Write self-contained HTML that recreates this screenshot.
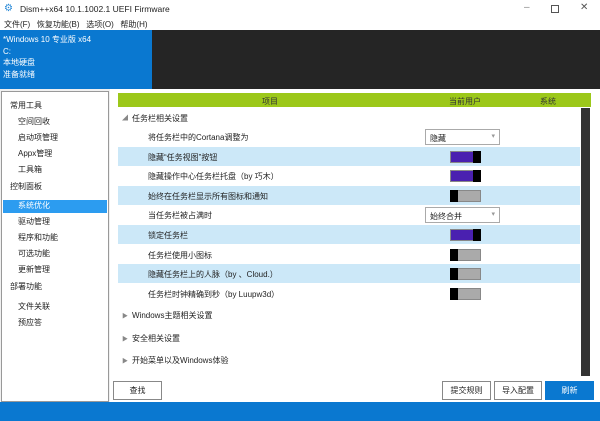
<!DOCTYPE html>
<html><head><meta charset="utf-8"><style>
*{margin:0;padding:0;box-sizing:border-box}
body{width:600px;height:421px;overflow:hidden;background:#fff;font-family:"Liberation Sans","Noto Sans CJK SC",sans-serif;font-size:8px;color:#222;position:relative}
.a{position:absolute;white-space:nowrap}
.row{position:absolute;left:118px;width:462px;height:19px}
.hl{background:#cce8f8}
.lbl{position:absolute;left:30px;top:5px}
.tog{position:absolute;left:332px;top:4px;width:31px;height:12px;border:1px solid #888}
.on{background:#4a20b0}
.off{background:#aaa}
.knob{position:absolute;top:-1px;width:8px;height:12px;background:#000}
.sel{position:absolute;left:307px;top:2px;width:75px;height:16px;border:1px solid #aaa;background:#fff;padding:3px 4px}
.sel:after{content:"▾";position:absolute;right:4px;top:2px;color:#999;font-size:7px}
.btn{position:absolute;top:381px;height:19px;border:1px solid #888;background:#fff;text-align:center;line-height:17px}
</style></head><body>
<div class="a" style="left:4px;top:4px;width:12px;height:10px;color:#2a8ad8;font-size:10px;line-height:10px">⚙</div>
<div class="a" style="left:20px;top:4px;font-size:8.5px">Dism++x64 10.1.1002.1 UEFI Firmware</div>
<div class="a" style="left:524px;top:2px;color:#888;font-size:10px">–</div>
<div class="a" style="left:551px;top:5px;width:8px;height:8px;border:1px solid #555"></div>
<div class="a" style="left:580px;top:2px;font-size:10px;color:#555">✕</div>
<div class="a" style="left:4px;top:19px;font-size:8px">文件(F)&nbsp;&nbsp;&nbsp;恢复功能(B)&nbsp;&nbsp;&nbsp;选项(O)&nbsp;&nbsp;&nbsp;帮助(H)</div>
<div class="a" style="left:0;top:30px;width:600px;height:59px;background:#252525"></div>
<div class="a" style="left:0;top:30px;width:152px;height:59px;background:#0a78d0;color:#fff;padding:4px 3px;line-height:11.5px;font-size:8px">*Windows 10 专业版 x64<br>C:<br>本地硬盘<br>准备就绪</div>
<div class="a" style="left:0;top:89px;width:600px;height:313px;background:#f0f0f0"></div>
<div class="a" style="left:1px;top:91px;width:108px;height:311px;background:#fff;border:1px solid #999"></div>
<div class="a" style="left:110px;top:89px;width:490px;height:313px;background:#fff"></div>
<div class="a" style="left:3px;top:200px;width:104px;height:13px;background:#2c9cf0"></div>
<div class="a" style="left:10px;top:98px;line-height:16px;font-size:8px">常用工具</div>
<div class="a" style="left:18px;top:114px;line-height:16px;font-size:8px">空间回收<br>启动项管理<br>Appx管理<br>工具箱</div>
<div class="a" style="left:10px;top:181px;font-size:8px">控制面板</div>
<div class="a" style="left:18px;top:198px;line-height:16px;font-size:8px"><span style="color:#fff">系统优化</span><br>驱动管理<br>程序和功能<br>可选功能<br>更新管理</div>
<div class="a" style="left:10px;top:281px;font-size:8px">部署功能</div>
<div class="a" style="left:18px;top:299px;line-height:16px;font-size:8px">文件关联<br>预应答</div>
<div class="a" style="left:118px;top:93px;width:473px;height:14px;background:#9cc81a"></div>
<div class="a" style="left:262px;top:96px;color:#333">项目</div>
<div class="a" style="left:449px;top:96px;color:#333">当前用户</div>
<div class="a" style="left:540px;top:96px;color:#333">系统</div>
<div class="a" style="left:581px;top:108px;width:9px;height:268px;background:#333"></div>
<div class="a" style="left:122px;top:113px;color:#888;font-size:6px">◢</div>
<div class="a" style="left:132px;top:113px">任务栏相关设置</div>
<div class="row" style="top:127px"><span class="lbl">将任务栏中的Cortana调整为</span><div class="sel">隐藏</div></div>
<div class="row hl" style="top:147px"><span class="lbl">隐藏“任务视图”按钮</span><div class="tog on"><div class="knob" style="right:-1px"></div></div></div>
<div class="row" style="top:166px"><span class="lbl">隐藏操作中心任务栏托盘（by 巧木）</span><div class="tog on"><div class="knob" style="right:-1px"></div></div></div>
<div class="row hl" style="top:186px"><span class="lbl">始终在任务栏显示所有图标和通知</span><div class="tog off"><div class="knob" style="left:-1px"></div></div></div>
<div class="row" style="top:205px"><span class="lbl">当任务栏被占满时</span><div class="sel">始终合并</div></div>
<div class="row hl" style="top:225px"><span class="lbl">锁定任务栏</span><div class="tog on"><div class="knob" style="right:-1px"></div></div></div>
<div class="row" style="top:245px"><span class="lbl">任务栏使用小图标</span><div class="tog off"><div class="knob" style="left:-1px"></div></div></div>
<div class="row hl" style="top:264px"><span class="lbl">隐藏任务栏上的人脉（by 、Cloud.）</span><div class="tog off"><div class="knob" style="left:-1px"></div></div></div>
<div class="row" style="top:284px"><span class="lbl">任务栏时钟精确到秒（by Luupw3d）</span><div class="tog off"><div class="knob" style="left:-1px"></div></div></div>
<div class="a" style="left:122px;top:311px;color:#888;font-size:6px">▶</div>
<div class="a" style="left:132px;top:310px">Windows主题相关设置</div>
<div class="a" style="left:122px;top:334px;color:#888;font-size:6px">▶</div>
<div class="a" style="left:132px;top:333px">安全相关设置</div>
<div class="a" style="left:122px;top:356px;color:#888;font-size:6px">▶</div>
<div class="a" style="left:132px;top:355px">开始菜单以及Windows体验</div>
<div class="btn" style="left:113px;width:49px">查找</div>
<div class="btn" style="left:442px;width:49px">提交规则</div>
<div class="btn" style="left:494px;width:48px">导入配置</div>
<div class="btn" style="left:545px;width:49px;background:#0a78d0;border-color:#0a78d0;color:#fff">刷新</div>
<div class="a" style="left:0;top:402px;width:600px;height:19px;background:#0a78d0"></div>
</body></html>
